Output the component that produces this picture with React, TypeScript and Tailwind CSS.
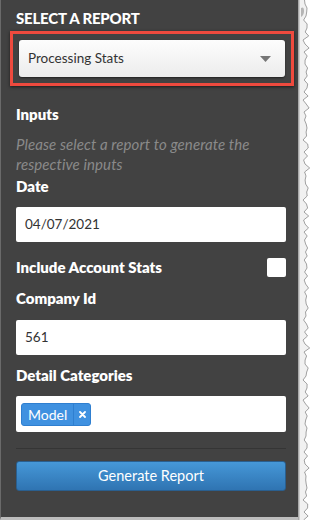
const jag = [
  0, 3, 6, 2, 9, 4, 13, 3, 17, 5, 21, 3, 25, 6, 29, 4, 33, 7, 37, 5, 41, 8, 45, 6, 49, 9, 53, 7,
];

function TornEdge() {
  // jagged paper edge on the right side of the capture
  const pts: string[] = [];
  for (let y = 0, i = 0; y <= 520; y += 4, i++) {
    const x = 5 + ((i * 7) % 5) + (i % 3 === 0 ? 1.5 : 0) + (jag[i % jag.length] % 3) * 0.6;
    pts.push(`${x.toFixed(1)},${y}`);
  }
  const fill = `0,0 ${pts.join(' ')} 0,520`;
  return (
    <svg width="17" height="520" viewBox="0 0 17 520" className="block shrink-0">
      <rect x="0" y="0" width="17" height="520" fill="#ffffff" />
      <polygon points={fill} fill="#f1f1f1" />
      <polyline points={pts.join(' ')} fill="none" stroke="#8a8a8a" strokeWidth="0.8" />
      <rect x="0" y="0" width="1.5" height="520" fill="#a9a9a9" />
      <path d="M3 8 q3 -2 3 3 q0 4 -3 6 z" fill="#b5b5b5" />
    </svg>
  );
}

function Label({ children, className = '' }: { children: React.ReactNode; className?: string }) {
  return <div className={`text-[15px] font-extrabold leading-5 text-white ${className}`}>{children}</div>;
}

export default function App() {
  return (
    <div
      className="flex h-[520px] w-[315px] overflow-hidden bg-white"
      style={{ fontFamily: 'Lato, "Open Sans", Arial, sans-serif' }}
    >
      <div className="flex h-[520px] w-[298px] shrink-0 flex-col border-b-[3px] border-l border-b-[#bdbdbd] border-l-[#6a6a6a] bg-[#424242] pl-[15px] pr-[12px]">
        <div className="pt-[8px] text-[15px] font-black uppercase leading-5 tracking-[-0.2px] text-white">
          Select a report
        </div>

        <div className="-ml-[6px] mt-[3px] w-[284px] border-[3px] border-[#ee4a3e] p-[6px] shadow-[0_1px_3px_rgba(0,0,0,0.6)]">
          <div className="flex h-[37px] items-center justify-between rounded-[3px] bg-gradient-to-b from-[#fdfdfd] to-[#ececec] pl-[9px] pr-[14px] shadow-[0_1px_2px_rgba(0,0,0,0.5)]">
            <span className="text-[13.5px] text-[#333]">Processing Stats</span>
            <svg width="11" height="6" viewBox="0 0 11 6">
              <path d="M0 0 H11 L5.5 6 Z" fill="#777" />
            </svg>
          </div>
        </div>

        <Label className="mt-[18px]">Inputs</Label>
        <div className="mt-[10px] text-[15px] italic leading-[20px] tracking-[0.1px] text-[#8a8a8a]">
          Please select a report to generate the respective inputs
        </div>

        <Label className="mt-[2px]">Date</Label>
        <div className="mt-[11px] flex h-[35px] w-[270px] items-center rounded-[2px] bg-white pl-[9px] text-[13.5px] text-[#333]">
          04/07/2021
        </div>

        <div className="mt-[15px] flex w-[270px] items-center justify-between">
          <Label>Include Account Stats</Label>
          <div className="h-[19px] w-[19px] rounded-[2px] bg-white" />
        </div>

        <Label className="mt-[11px]">Company Id</Label>
        <div className="mt-[12px] flex h-[35px] w-[270px] items-center rounded-[2px] bg-white pl-[9px] text-[13.5px] text-[#333]">
          561
        </div>

        <Label className="mt-[10px]">Detail Categories</Label>
        <div className="mt-[11px] flex h-[36px] w-[270px] items-center rounded-[2px] bg-white pl-[5px]">
          <div className="flex h-[23px] items-stretch overflow-hidden rounded-[3px] border border-[#2f7fd0] bg-[#3f91e0] text-white">
            <span className="flex items-center px-[6px] text-[14px]">Model</span>
            <span className="flex w-[17px] items-center justify-center border-l border-[#2f7fd0]">
              <svg width="7" height="7" viewBox="0 0 7 7">
                <path d="M1 1 L6 6 M6 1 L1 6" stroke="#fff" strokeWidth="1.8" strokeLinecap="round" />
              </svg>
            </span>
          </div>
        </div>

        <div className="mt-[16px] h-px w-[270px] bg-[#353535]" />

        <button
          type="button"
          className="mt-[12px] flex h-[30px] w-[270px] items-center justify-center rounded-[3px] border border-[#2a5f8f] bg-gradient-to-b from-[#4698d8] to-[#2f74b2] text-[14.5px] text-white"
        >
          Generate Report
        </button>
      </div>
      <TornEdge />
    </div>
  );
}
